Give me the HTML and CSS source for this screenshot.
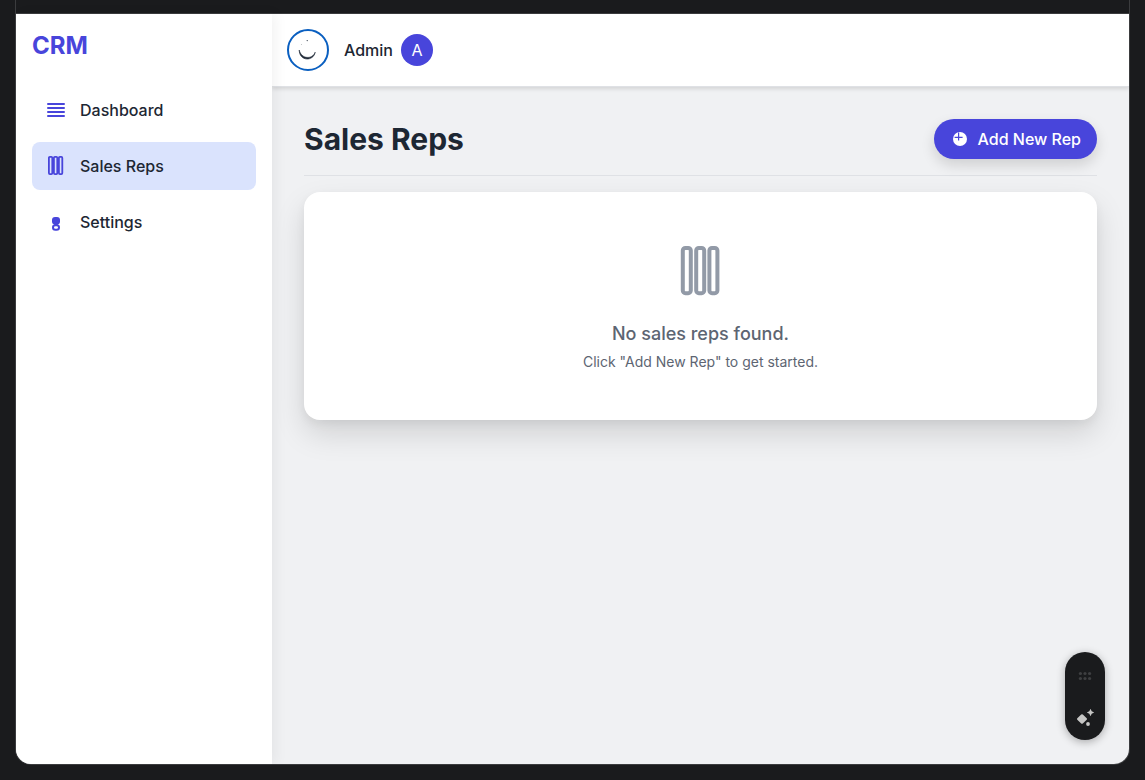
FILE: index.html
```html
<!DOCTYPE html>
<html lang="en">
<head>
<meta charset="utf-8">
<meta name="viewport" content="width=device-width, initial-scale=1">
<title>CRM - Sales Reps</title>
<link rel="stylesheet" href="styles.css">
</head>
<body>
<div class="frame">
  <div class="frame-bar"></div>
  <div class="app">
    <aside class="sidebar">
      <div class="brand">CRM</div>
      <nav class="nav">
        <a class="nav-link" href="#dashboard">
          <svg class="nav-icon" viewBox="0 0 24 24" fill="none" stroke="currentColor" stroke-width="2" stroke-linecap="round" aria-hidden="true"><path d="M4 6h16M4 10h16M4 14h16M4 18h16"/></svg>
          Dashboard
        </a>
        <a class="nav-link nav-link-active" href="#sales-reps" aria-current="page">
          <svg class="nav-icon" viewBox="0 0 24 24" fill="none" stroke="currentColor" stroke-width="1.8" aria-hidden="true"><rect x="4.9" y="2.9" width="3.4" height="17.2" rx="1"/><rect x="9.9" y="2.9" width="3.4" height="17.2" rx="1"/><rect x="14.9" y="2.9" width="3.4" height="17.2" rx="1"/></svg>
          Sales Reps
        </a>
        <a class="nav-link" href="#settings">
          <svg class="nav-icon" viewBox="0 0 24 24" fill="none" stroke="currentColor" stroke-width="2" aria-hidden="true"><rect x="8" y="7" width="8" height="7.6" rx="3" fill="currentColor" stroke="none"/><path d="M10.2 14h3.6"/><rect x="9" y="15.2" width="6" height="4.6" rx="2.3"/></svg>
          Settings
        </a>
      </nav>
    </aside>
    <div class="content">
      <header class="topbar">
        <button class="theme-toggle" type="button" aria-label="Toggle theme">
          <svg class="theme-icon" viewBox="0 0 22 22" fill="#1f2937" aria-hidden="true"><path d="M2.2 11C2.2 22.4 16.4 22.8 18.2 13.2C15.4 20.6 4.4 20.4 2.2 11Z" stroke="#1f2937" stroke-width=".6"/><circle cx="10.2" cy="1.6" r=".6"/><circle cx="4.6" cy="5.4" r=".3"/></svg>
        </button>
        <div class="user">
          <span class="user-name">Admin</span>
          <span class="avatar">A</span>
        </div>
      </header>
      <main class="main">
        <div class="page-head">
          <h1 class="page-title">Sales Reps</h1>
          <button class="add-button" type="button">
            <svg class="add-icon" viewBox="0 0 20 20" aria-hidden="true"><circle cx="10" cy="10" r="7" fill="#fff"/><path d="M8.6 3.5v8M4.6 8.4h8" stroke="#4845db" stroke-width="1.2"/></svg>
            Add New Rep
          </button>
        </div>
        <section class="empty-card">
          <svg class="empty-icon" viewBox="0 0 64 64" fill="none" stroke="currentColor" stroke-width="4" aria-hidden="true"><rect x="13.8" y="8" width="8" height="45.2" rx="2.6"/><rect x="27.2" y="8" width="8" height="45.2" rx="2.6"/><rect x="40.4" y="8" width="8" height="45.2" rx="2.6"/></svg>
          <p class="empty-title">No sales reps found.</p>
          <p class="empty-text">Click "Add New Rep" to get started.</p>
        </section>
      </main>
    </div>
  </div>
  <div class="tool-pill">
    <button class="pill-button pill-handle" type="button" aria-label="Move toolbar">
      <svg class="pill-icon" viewBox="0 0 20 20" fill="#3e3f41" aria-hidden="true"><circle cx="5.4" cy="7.5" r="1.6"/><circle cx="10" cy="7.5" r="1.6"/><circle cx="14.6" cy="7.5" r="1.6"/><circle cx="5.4" cy="12.5" r="1.6"/><circle cx="10" cy="12.5" r="1.6"/><circle cx="14.6" cy="12.5" r="1.6"/></svg>
    </button>
    <button class="pill-button" type="button" aria-label="Assistant">
      <svg class="pill-icon" viewBox="0 0 20 20" fill="#c6c6c5" aria-hidden="true"><path d="M6.2 6.6Q7 5.8 7.8 6.6L11.7 10.3Q12.4 11 11.7 11.7L7.8 15.5Q7 16.2 6.2 15.5L2.3 11.7Q1.6 11 2.3 10.3Z"/><path d="M15.5 .8L16.7 3.3L19.2 4.5L16.7 5.7L15.5 8.2L14.3 5.7L11.8 4.5L14.3 3.3Z"/><circle cx="13" cy="16" r="1.9"/></svg>
    </button>
  </div>
</div>
</body>
</html>
```

FILE: styles.css
```css
* {
  box-sizing: border-box;
}

body {
  margin: 0;
  padding: 0 15px 15px;
  min-height: 100vh;
  display: flex;
  background: #1a1b1d;
  color: #1d2733;
  font-family: Inter, "Liberation Sans", sans-serif;
  font-size: 16px;
  line-height: 24px;
}

button {
  font: inherit;
  color: inherit;
  border: 0;
  padding: 0;
  background: none;
  cursor: pointer;
}

h1,
p {
  margin: 0;
}

.frame {
  position: relative;
  flex: 1;
  display: flex;
  flex-direction: column;
  overflow: hidden;
  border: 1px solid #3b3c3e;
  border-top: 0;
  border-radius: 0 0 16px 16px;
}

.frame-bar {
  height: 14px;
  border-bottom: 1px solid #3b3c3e;
}

.app {
  flex: 1;
  display: flex;
  background: #f0f1f3;
}

.sidebar {
  position: relative;
  z-index: 2;
  flex: 0 0 256px;
  padding: 16px;
  background: #fff;
  box-shadow: 4px 0 12px rgba(0, 0, 0, 0.05);
}

.brand {
  margin-bottom: 24px;
  color: #4845db;
  font-size: 24px;
  font-weight: 700;
  line-height: 32px;
}

.nav {
  display: flex;
  flex-direction: column;
  gap: 8px;
}

.nav-link {
  display: flex;
  align-items: center;
  gap: 12px;
  padding: 12px;
  border-radius: 8px;
  color: #1d2733;
  font-weight: 500;
  text-decoration: none;
}

.nav-link-active {
  background: #dae3fd;
}

.nav-icon {
  width: 24px;
  height: 24px;
  color: #4845db;
}

.content {
  flex: 1;
  min-width: 0;
  display: flex;
  flex-direction: column;
}

.topbar {
  position: relative;
  z-index: 1;
  display: flex;
  align-items: center;
  gap: 15px;
  padding: 15px;
  border-bottom: 1px solid #dfe1e5;
  background: #fff;
  box-shadow: 0 2px 4px rgba(0, 0, 0, 0.12);
}

.theme-toggle {
  display: grid;
  place-items: center;
  width: 42px;
  height: 42px;
  border: 2px solid #0a5fc0;
  border-radius: 50%;
}

.theme-icon {
  width: 22px;
  height: 22px;
}

.user {
  display: flex;
  align-items: center;
  gap: 8px;
}

.user-name {
  font-weight: 500;
}

.avatar {
  display: grid;
  place-items: center;
  width: 32px;
  height: 32px;
  border-radius: 50%;
  background: #4845db;
  color: #fff;
}

.main {
  flex: 1;
  padding: 32px;
}

.page-head {
  display: flex;
  align-items: center;
  justify-content: space-between;
  margin-bottom: 16px;
  padding-bottom: 16px;
  border-bottom: 1px solid #dfe1e5;
}

.page-title {
  font-size: 30px;
  font-weight: 700;
  line-height: 40px;
}

.add-button {
  display: flex;
  align-items: center;
  gap: 8px;
  padding: 8px 16px;
  border-radius: 20px;
  background: #4845db;
  color: #fff;
  font-weight: 500;
  box-shadow: 0 6px 14px rgba(0, 0, 0, 0.14);
}

.add-icon {
  width: 20px;
  height: 20px;
}

.empty-card {
  display: flex;
  flex-direction: column;
  align-items: center;
  padding: 48px;
  border-radius: 16px;
  background: #fff;
  color: #5d6572;
  text-align: center;
  box-shadow: 0 4px 10px rgba(0, 0, 0, 0.05), 0 14px 30px rgba(0, 0, 0, 0.13);
}

.empty-icon {
  width: 64px;
  height: 64px;
  margin-bottom: 16px;
  color: #929aa7;
}

.empty-title {
  margin-bottom: 4px;
  font-size: 18px;
  font-weight: 500;
  line-height: 28px;
}

.empty-text {
  font-size: 14px;
  line-height: 20px;
}

.tool-pill {
  position: absolute;
  right: 24px;
  bottom: 24px;
  z-index: 3;
  display: flex;
  flex-direction: column;
  gap: 4px;
  padding: 4px;
  border-radius: 20px;
  background: #1a1b1d;
  box-shadow: 0 2px 8px rgba(0, 0, 0, 0.3);
}

.pill-button {
  display: grid;
  place-items: center;
  width: 32px;
  height: 36px;
}

.pill-handle {
  height: 40px;
}

.pill-icon {
  width: 20px;
  height: 20px;
}
```
